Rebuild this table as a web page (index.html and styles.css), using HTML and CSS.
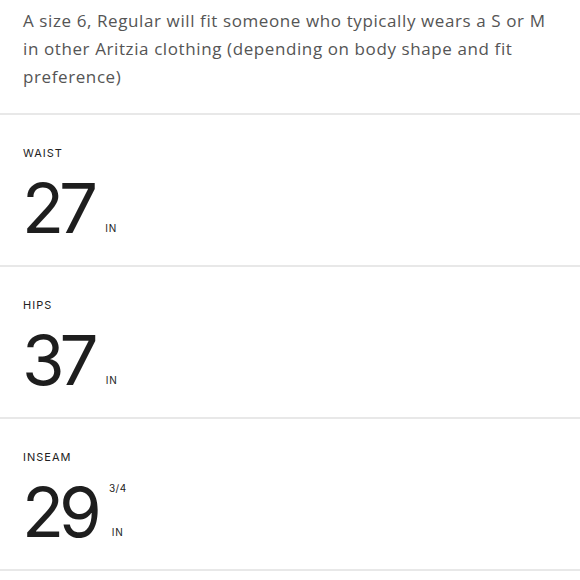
FILE: index.html
```html
<!DOCTYPE html>
<html>
<head>
<meta charset="utf-8">
<link rel="stylesheet" href="styles.css">
</head>
<body>
<div class="page">
  <p class="intro">A size 6, Regular will fit someone who typically wears a S or M in other Aritzia clothing (depending on body shape and fit preference)</p>
  <section class="measure">
    <div class="label">WAIST</div>
    <div class="value">
      <span class="num">27</span>
      <span class="units"><span class="frac"></span><span class="unit">IN</span></span>
    </div>
  </section>
  <section class="measure">
    <div class="label">HIPS</div>
    <div class="value">
      <span class="num">37</span>
      <span class="units"><span class="frac"></span><span class="unit">IN</span></span>
    </div>
  </section>
  <section class="measure">
    <div class="label">INSEAM</div>
    <div class="value">
      <span class="num">29</span>
      <span class="units"><span class="frac">3/4</span><span class="unit">IN</span></span>
    </div>
  </section>
  <div class="end"></div>
</div>
</body>
</html>
```

FILE: styles.css
```css
html, body {
  margin: 0;
  padding: 0;
  background: #fff;
}
.page {
  width: 580px;
  font-family: "Inter", "Liberation Sans", sans-serif;
  color: #222;
}
.intro {
  margin: 0;
  padding: 7px 30px 0 23px;
  height: 113px;
  box-sizing: border-box;
  font-family: "Open Sans", sans-serif;
  font-size: 17px;
  letter-spacing: 0.6px;
  line-height: 28px;
  color: #555;
}
.measure {
  border-top: 2px solid #e8e8e8;
  height: 119px;
  padding: 31px 0 0 23px;
}
.label {
  font-size: 11px;
  letter-spacing: 1px;
  line-height: 14px;
  color: #222;
}
.value {
  display: flex;
  align-items: stretch;
  margin-top: 18px;
}
.num {
  font-size: 69px;
  line-height: 60px;
  letter-spacing: -5px;
  margin-left: -1px;
  color: #1e1e1e;
}
.units {
  display: flex;
  flex-direction: column;
  justify-content: space-between;
  align-items: center;
  margin-left: 12px;
  font-size: 10px;
  letter-spacing: 1px;
  line-height: 12px;
}
.frac {
  letter-spacing: 0.5px;
}
.unit {
  margin-bottom: 4px;
}
.end {
  border-top: 2px solid #e8e8e8;
  height: 10px;
}
```
